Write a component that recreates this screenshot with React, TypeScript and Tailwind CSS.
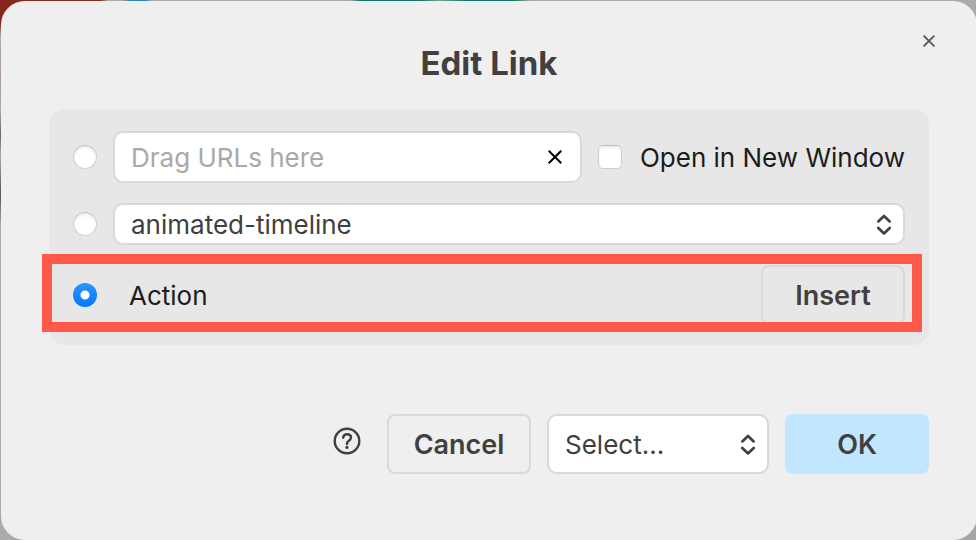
import { useState } from "react";
import type { ReactNode } from "react";

type Target = "url" | "page" | "action";

const radioStyle =
  "size-6 shrink-0 appearance-none rounded-full border border-[#cfcfcf] border-t-[#bdbdbd] bg-white shadow-[inset_0_2px_3px_rgba(0,0,0,0.08)] checked:border-0 checked:bg-[radial-gradient(circle,#fff_4px,transparent_5px),linear-gradient(#2d94ff,#0277ff)] checked:shadow-none";

const fieldStyle =
  "w-full appearance-none rounded-[10px] border-2 border-[#d9d9d9] bg-white px-4 text-[26px] text-[#404040] outline-none";

const buttonStyle = "h-15 w-36 shrink-0 rounded-lg pt-0.5 text-[27px] font-semibold text-[#404040]";

function Chevrons() {
  return (
    <svg
      className="pointer-events-none absolute inset-y-0 right-[13px] my-auto h-6 w-4"
      viewBox="0 0 16 24"
      fill="none"
      stroke="#404040"
      strokeWidth="2.7"
      strokeLinecap="round"
      strokeLinejoin="round"
      aria-hidden="true"
    >
      <path d="M2.3 9.4 8 4l5.7 5.4M2.3 16 8 21.4l5.7-5.4" />
    </svg>
  );
}

function Cross({ className, width }: { className: string; width: number }) {
  return (
    <svg className={className} viewBox="0 0 14 14" stroke="currentColor" strokeWidth={width} aria-hidden="true">
      <path d="M.7.7l12.6 12.6M13.3.7.7 13.3" />
    </svg>
  );
}

function SelectBox({ label, className, children }: { label: string; className: string; children: ReactNode }) {
  return (
    <div className={`relative ${className}`}>
      <select aria-label={label} className={`${fieldStyle} h-full`}>
        {children}
      </select>
      <Chevrons />
    </div>
  );
}

export default function App() {
  const [target, setTarget] = useState<Target>("action");
  const [url, setUrl] = useState("");

  return (
    <div className="flex min-h-screen overflow-hidden bg-[#a6a6a6] bg-[linear-gradient(#85291f_0,#85291f_24px,#aaa_36px,#a99_80px,#aaa_110px,#666_135px,#aaa_155px,#555_195px,#aaa_225px,#aaa_100%),linear-gradient(to_right,#85291f_0,#85291f_100px,#aaa_108px,#aaa_122px,#2a85b5_130px,#2a85b5_145px,#aaa_152px,#aaa_350px,#14776a_360px,#14776a_420px,#7a9f99_440px,#14776a_465px,#14776a_515px,#aaa_530px,#aaa_100%)] bg-[size:12px_100%,100%_20px] bg-no-repeat pt-px pl-px font-['Inter','Liberation_Sans',sans-serif]">
      <main
        role="dialog"
        aria-labelledby="dialog-title"
        className="relative -mr-px flex-1 rounded-3xl bg-[#efefef] px-12 pb-16"
      >
        <button
          type="button"
          aria-label="Close"
          className="absolute top-7 right-9 flex size-6 items-center justify-center text-[#555]"
        >
          <Cross className="size-3" width={2.1} />
        </button>

        <h1 id="dialog-title" className="pt-[38px] pb-[22px] text-center text-[33px] leading-12 font-bold text-[#404040]">
          Edit Link
        </h1>

        <section className="flex flex-col gap-5 rounded-2xl bg-[#e7e7e7] px-6 pt-[22px] pb-5 text-[26px] text-[#1c1c1c]">
          <div className="flex items-center gap-4">
            <input
              type="radio"
              name="target"
              aria-label="URL"
              className={radioStyle}
              checked={target === "url"}
              onChange={() => setTarget("url")}
            />
            <div className="relative h-13 min-w-0 flex-1">
              <input
                type="text"
                aria-label="URL address"
                placeholder="Drag URLs here"
                value={url}
                onChange={(e) => setUrl(e.target.value)}
                className={`${fieldStyle} h-full placeholder:text-[#a9a9a9]`}
              />
              <button
                type="button"
                aria-label="Clear URL"
                onClick={() => setUrl("")}
                className="absolute inset-y-0 right-5 text-black"
              >
                <Cross className="size-3.5" width={2} />
              </button>
            </div>
            <label className="flex items-center gap-[18px] whitespace-nowrap">
              <input
                type="checkbox"
                className="size-6 shrink-0 appearance-none rounded-[5px] border border-[#cfcfcf] border-t-[#bdbdbd] bg-white shadow-[inset_0_2px_3px_rgba(0,0,0,0.08)] checked:bg-[#0277ff]"
              />
              Open in New Window
            </label>
          </div>

          <div className="flex items-center gap-4">
            <input
              type="radio"
              name="target"
              aria-label="Page"
              className={radioStyle}
              checked={target === "page"}
              onChange={() => setTarget("page")}
            />
            <SelectBox label="Page" className="h-[42px] flex-1">
              <option>animated-timeline</option>
            </SelectBox>
          </div>

          <div className="relative flex items-center justify-between">
            <label className="flex items-center gap-8">
              <input
                type="radio"
                name="target"
                className={radioStyle}
                checked={target === "action"}
                onChange={() => setTarget("action")}
              />
              Action
            </label>
            <button type="button" className={`${buttonStyle} border-2 border-[#d9d9d9]`}>
              Insert
            </button>
            <div className="pointer-events-none absolute -top-[11px] right-[-17px] -bottom-[7px] -left-[31px] border-10 border-[#ff594b]" />
          </div>
        </section>

        <footer className="mt-[69px] flex justify-end gap-4">
          <button type="button" aria-label="Help" className="mr-2.5 h-[54px] text-[#404040]">
            <svg className="size-7" viewBox="0 0 28 28" fill="none" stroke="currentColor" strokeWidth="2.4" aria-hidden="true">
              <circle cx="14" cy="14" r="12.3" />
              <path
                d="M10.2 10.8c.1-2.3 1.7-3.6 3.9-3.6 2.3 0 3.9 1.3 3.9 3.3 0 1.6-.9 2.4-2.1 3.2-1.2.8-1.9 1.5-1.9 2.8v.5"
                strokeLinecap="round"
              />
              <circle cx="13.9" cy="20.4" r="1.6" fill="currentColor" stroke="none" />
            </svg>
          </button>
          <button type="button" className={`${buttonStyle} border-2 border-[#d9d9d9]`}>
            Cancel
          </button>
          <SelectBox label="Link preset" className="h-15 w-[222px]">
            <option>Select...</option>
          </SelectBox>
          <button type="button" className={`${buttonStyle} bg-[#c3e6ff]`}>
            OK
          </button>
        </footer>
      </main>
    </div>
  );
}
